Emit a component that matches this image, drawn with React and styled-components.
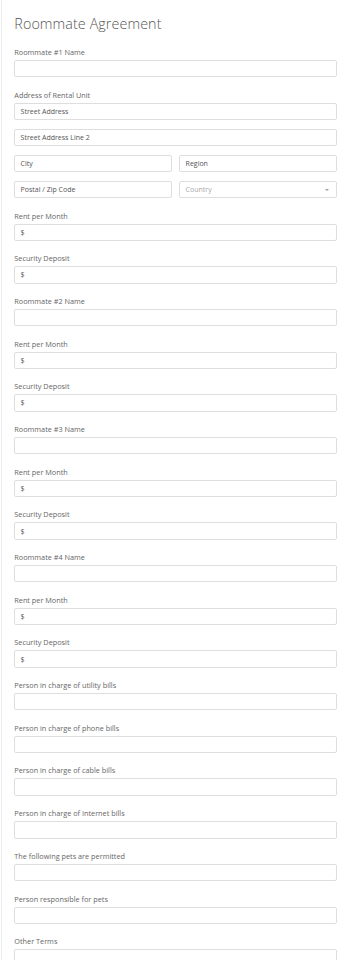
import React from "react";
import styled, { createGlobalStyle } from "styled-components";

const GlobalStyle = createGlobalStyle`
  html, body {
    margin: 0;
    padding: 0;
    background: #fff;
  }
  body {
    font-family: "Open Sans", "Liberation Sans", sans-serif;
    color: #555;
  }
`;

const Page = styled.div`
  margin-left: 1px;
  border-left: 1px solid #ededed;
  min-height: 960px;
  padding: 13.8px 13.3px 0 12.3px;
  box-sizing: border-box;
`;

const Title = styled.h1`
  margin: 0 0 13.2px;
  font-size: 14.3px;
  line-height: 20px;
  font-weight: 300;
  letter-spacing: 0.1px;
  color: #555;
`;

const Field = styled.div`
  margin-bottom: 12.3px;
`;

const Label = styled.div`
  font-size: 7.3px;
  line-height: 10px;
  height: 10px;
  color: #666;
  margin-bottom: 3px;
  white-space: nowrap;
`;

const Stack = styled.div`
  display: flex;
  flex-direction: column;
  gap: 8.67px;
`;

const Row = styled.div`
  display: grid;
  grid-template-columns: 1fr 1fr;
  column-gap: 7.6px;
`;

const Input = styled.div`
  position: relative;
  box-sizing: border-box;
  height: 17.4px;
  border: 1px solid #dedede;
  border-radius: 2px;
  background: #fff;
  padding-left: 5.3px;
  display: flex;
  align-items: center;
  font-size: 7px;
  color: ${(p) => (p.$muted ? "#a9a9a9" : "#555")};
  white-space: nowrap;
`;

const Caret = styled.span`
  position: absolute;
  right: 7px;
  top: 50%;
  margin-top: -1px;
  width: 0;
  height: 0;
  border-left: 2.5px solid transparent;
  border-right: 2.5px solid transparent;
  border-top: 2.5px solid #a0a0a0;
`;

const rest = [
  "Roommate #2 Name",
  "Rent per Month",
  "Security Deposit",
  "Roommate #3 Name",
  "Rent per Month",
  "Security Deposit",
  "Roommate #4 Name",
  "Rent per Month",
  "Security Deposit",
  "Person in charge of utility bills",
  "Person in charge of phone bills",
  "Person in charge of cable bills",
  "Person in charge of Internet bills",
  "The following pets are permitted",
  "Person responsible for pets",
  "Other Terms",
];

function TextField({ label }) {
  const money = label === "Rent per Month" || label === "Security Deposit";
  return (
    <Field>
      <Label>{label}</Label>
      <Input>{money ? "$" : ""}</Input>
    </Field>
  );
}

export default function App() {
  return (
    <>
      <GlobalStyle />
      <Page>
        <Title>Roommate Agreement</Title>
        <TextField label="Roommate #1 Name" />
        <Field>
          <Label>Address of Rental Unit</Label>
          <Stack>
            <Input>Street Address</Input>
            <Input>Street Address Line 2</Input>
            <Row>
              <Input>City</Input>
              <Input>Region</Input>
            </Row>
            <Row>
              <Input>Postal / Zip Code</Input>
              <Input $muted>
                Country
                <Caret />
              </Input>
            </Row>
          </Stack>
        </Field>
        <TextField label="Rent per Month" />
        <TextField label="Security Deposit" />
        {rest.map((label, i) => (
          <TextField key={i} label={label} />
        ))}
      </Page>
    </>
  );
}
